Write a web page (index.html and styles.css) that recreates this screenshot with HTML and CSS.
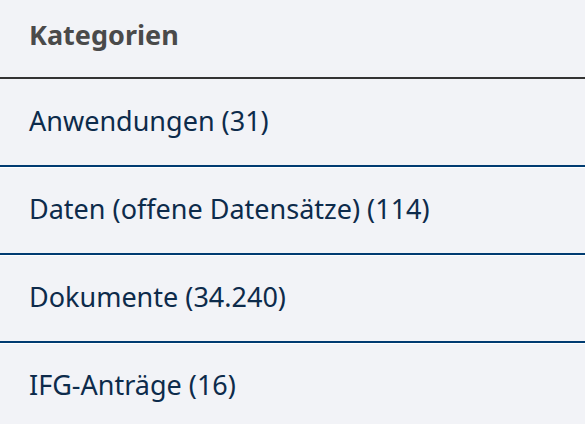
FILE: index.html
```html
<!DOCTYPE html>
<html>
    <head>
        <title>Kategorien</title>
        <link rel="stylesheet" href="styles.css">
    </head>
    <body>
        <div class="categories">
            <h2 class="categories-title">Kategorien</h2>
            <ul class="category-list">
                <li><a href="#">Anwendungen (31)</a></li>
                <li><a href="#">Daten (offene Datensätze) (114)</a></li>
                <li><a href="#">Dokumente (34.240)</a></li>
                <li><a href="#">IFG-Anträge (16)</a></li>
            </ul>
        </div>
    </body>
</html>
```

FILE: styles.css
```css
body {
    font-family: "Noto Sans", "Open Sans", sans-serif;
    background-color: #f2f3f7;
    margin: 0;
}
.categories {
    width: 100%;
}
.categories-title {
    margin: 0;
    height: 79px;
    box-sizing: border-box;
    padding: 17px 0 0 29px;
    font-size: 27px;
    line-height: 36px;
    font-weight: bold;
    color: #4a4a4a;
    border-bottom: 2px solid #333333;
}
.category-list {
    list-style: none;
    margin: 0;
    padding: 0;
}
.category-list li {
    height: 88px;
    box-sizing: border-box;
    border-bottom: 2px solid #003b71;
    box-shadow: 0 1px 0 #ffffff;
    display: flex;
    align-items: center;
    padding: 0 0 4px 29px;
}
.category-list a {
    font-size: 27px;
    color: #0d2b4b;
    text-decoration: none;
}
```
